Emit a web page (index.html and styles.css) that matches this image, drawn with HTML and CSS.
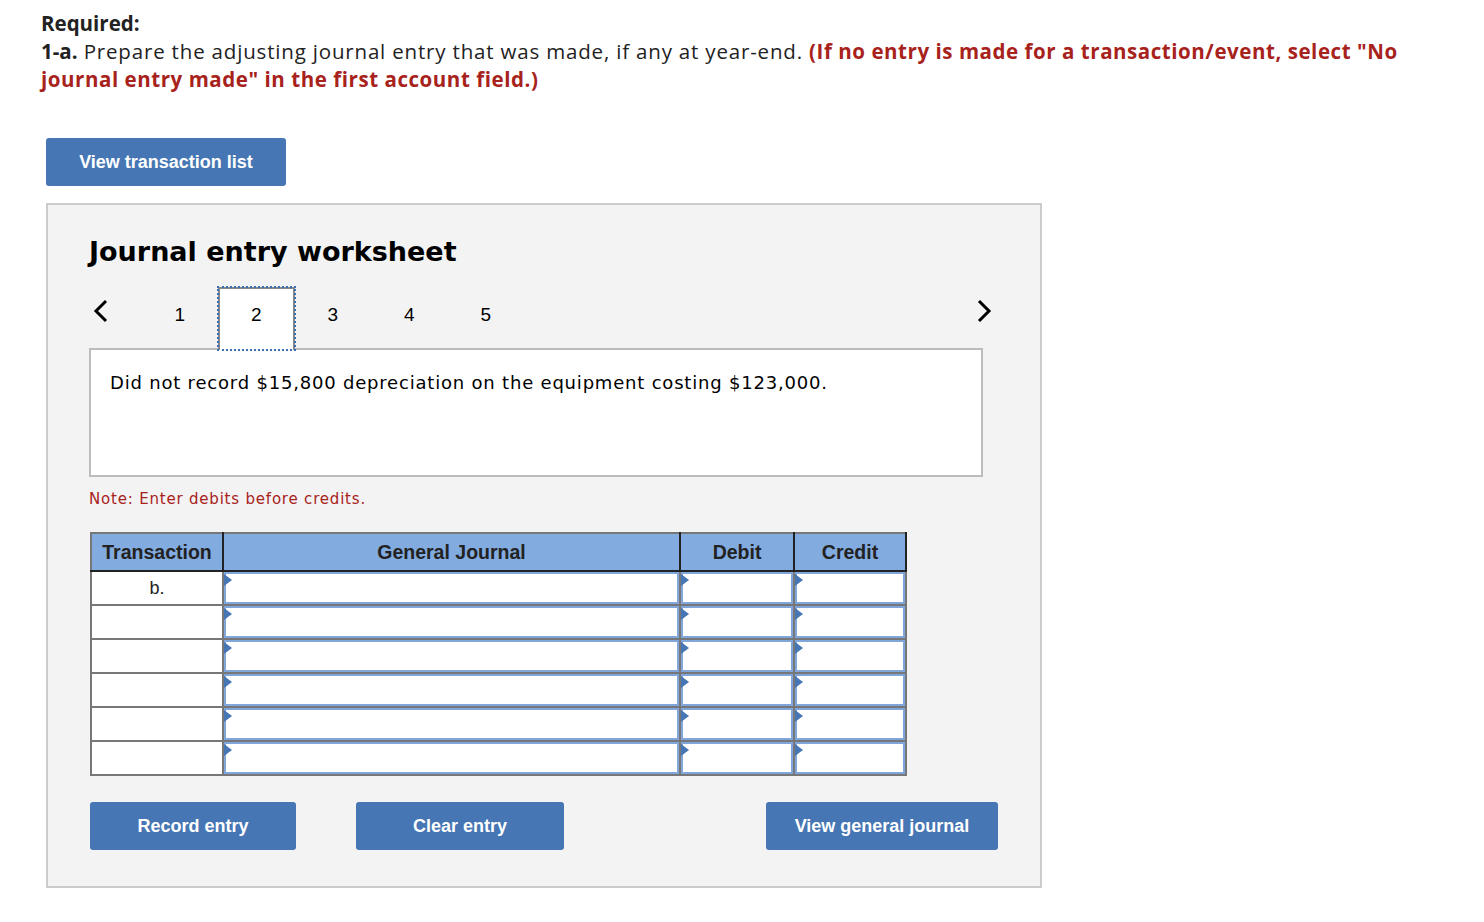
FILE: index.html
```html
<!DOCTYPE html>
<html lang="en">
<head>
  <meta charset="UTF-8" />
  <title>Journal entry worksheet</title>
  <meta name="viewport" content="width=device-width, initial-scale=1" />
  <link rel="stylesheet" href="styles.css">
</head>
<body>
  <div class="question">
    <p class="required">Required:</p>
    <p class="prompt"><b>1-a.</b> Prepare the adjusting journal entry that was made, if any at year-end. <span class="hint">(If no entry is made for a transaction/event, select "No journal entry made" in the first account field.)</span></p>
  </div>

  <button class="btn btn-list">View transaction list</button>

  <div class="worksheet">
    <h2>Journal entry worksheet</h2>

    <div class="tabs">
      <button class="arrow prev">
        <svg width="16" height="24" viewBox="0 0 16 24"><path d="M13 2 L3 12 L13 22" fill="none" stroke="#000" stroke-width="3"/></svg>
      </button>
      <span class="tab">1</span>
      <span class="tab active">2</span>
      <span class="tab">3</span>
      <span class="tab">4</span>
      <span class="tab">5</span>
      <span class="spacer"></span>
      <button class="arrow next">
        <svg width="16" height="24" viewBox="0 0 16 24"><path d="M3 2 L13 12 L3 22" fill="none" stroke="#000" stroke-width="3"/></svg>
      </button>
    </div>

    <div class="description">Did not record $15,800 depreciation on the equipment costing $123,000.</div>

    <p class="note">Note: Enter debits before credits.</p>

    <table class="journal">
      <colgroup>
        <col class="c-trans">
        <col class="c-account">
        <col class="c-debit">
        <col class="c-credit">
      </colgroup>
      <thead>
        <tr>
          <th>Transaction</th>
          <th>General Journal</th>
          <th>Debit</th>
          <th>Credit</th>
        </tr>
      </thead>
      <tbody>
        <tr>
          <td class="trans">b.</td>
          <td><div class="field"></div></td>
          <td><div class="field"></div></td>
          <td><div class="field"></div></td>
        </tr>
        <tr>
          <td class="trans"></td>
          <td><div class="field"></div></td>
          <td><div class="field"></div></td>
          <td><div class="field"></div></td>
        </tr>
        <tr>
          <td class="trans"></td>
          <td><div class="field"></div></td>
          <td><div class="field"></div></td>
          <td><div class="field"></div></td>
        </tr>
        <tr>
          <td class="trans"></td>
          <td><div class="field"></div></td>
          <td><div class="field"></div></td>
          <td><div class="field"></div></td>
        </tr>
        <tr>
          <td class="trans"></td>
          <td><div class="field"></div></td>
          <td><div class="field"></div></td>
          <td><div class="field"></div></td>
        </tr>
        <tr>
          <td class="trans"></td>
          <td><div class="field"></div></td>
          <td><div class="field"></div></td>
          <td><div class="field"></div></td>
        </tr>
      </tbody>
    </table>

    <div class="actions">
      <button class="btn btn-record">Record entry</button>
      <button class="btn btn-clear">Clear entry</button>
      <span class="spacer"></span>
      <button class="btn btn-journal">View general journal</button>
    </div>
  </div>
</body>
</html>
```

FILE: styles.css
```css
body {
  margin: 0;
  padding: 9px 0 0 41px;
  font-family: "Open Sans", Lato, sans-serif;
  background-color: #fff;
  color: #222;
}

.question {
  width: 1380px;
  font-size: 20.5px;
  line-height: 28px;
}

.question p {
  margin: 0;
}

.required {
  font-weight: bold;
}

.prompt {
  letter-spacing: 0.82px;
}

.prompt b {
  font-weight: bold;
  letter-spacing: 0;
}

.hint {
  color: #a8221c;
  font-weight: bold;
  letter-spacing: 0.55px;
}

.btn {
  background-color: #4676b4;
  color: #fff;
  border: none;
  border-radius: 3px;
  font-family: "Liberation Sans", Arial, sans-serif;
  font-weight: bold;
  font-size: 18px;
  height: 48px;
  cursor: pointer;
  padding: 0;
}

.btn-list {
  display: block;
  width: 240px;
  margin: 45px 0 17px 5px;
}

.worksheet {
  height: 681px;
  width: 951px;
  margin-left: 5px;
  border: 2px solid #cbcbcb;
  background-color: #f3f3f3;
  padding: 0 0 0 41px;
}

.worksheet h2 {
  margin: 29px 0 0 0;
  font-family: "DejaVu Sans", Verdana, sans-serif;
  font-size: 27px;
  line-height: 36px;
  font-weight: bold;
  color: #000;
}

.tabs {
  display: flex;
  align-items: flex-start;
  height: 64px;
  margin: 17px 0 -3px 0;
  width: 903px;
  position: relative;
  z-index: 1;
}

.arrow {
  background: none;
  border: none;
  padding: 0;
  margin-top: 12px;
  cursor: pointer;
  height: 24px;
}

.arrow.prev {
  margin-left: 4px;
  margin-right: 32.5px;
}

.tab {
  width: 76.5px;
  height: 63px;
  box-sizing: border-box;
  padding-top: 17px;
  text-align: center;
  font-family: "Liberation Sans", Arial, sans-serif;
  font-size: 19px;
  color: #000;
}

.tab.active {
  position: relative;
  background-color: #fff;
  border: 2px solid #888;
  border-bottom: none;
  padding-top: 15px;
}

/* focus ring */
.tab.active::after {
  content: "";
  position: absolute;
  top: -3px;
  left: -3px;
  right: -3px;
  bottom: -1px;
  border: 2px dotted #3a6fb8;
}

.spacer {
  flex: 1;
}

.description {
  width: 894px;
  height: 129px;
  box-sizing: border-box;
  background-color: #fff;
  border: 2px solid #bcbcbc;
  padding: 22px 19px;
  font-family: "DejaVu Sans", Verdana, sans-serif;
  font-size: 18px;
  letter-spacing: 0.8px;
  color: #000;
}

.note {
  margin: 12px 0 23px 0;
  font-family: "DejaVu Sans", Verdana, sans-serif;
  font-size: 15px;
  letter-spacing: 0.8px;
  line-height: 20px;
  color: #a8221c;
}

.journal {
  border-collapse: collapse;
  table-layout: fixed;
  width: 815px;
  margin-left: 1px;
  border: 2px solid #777;
  font-family: "Liberation Sans", Arial, sans-serif;
}

.c-trans { width: 132px; }
.c-account { width: 457px; }
.c-debit { width: 114px; }
.c-credit { width: 112px; }

.journal th {
  background-color: #82abe0;
  color: #222;
  font-size: 19.5px;
  font-weight: bold;
  height: 36px;
  padding: 0;
  border: 2px solid #222;
  border-top-color: #777;
}

.journal th:first-child {
  border-left-color: #777;
}

.journal td {
  height: 32px;
  padding: 0;
  border: 2px solid #777;
  background-color: #fff;
  vertical-align: top;
}

.journal td.trans {
  text-align: center;
  vertical-align: middle;
  font-size: 18px;
  color: #222;
}

.field {
  position: relative;
  height: 32px;
  box-sizing: border-box;
  border: 2px solid #80a6dc;
  background-color: #fff;
}

.field::before {
  content: "";
  position: absolute;
  left: -2px;
  top: 0;
  border-top: 6px solid transparent;
  border-bottom: 6px solid transparent;
  border-left: 8px solid #4676b4;
}

.actions {
  display: flex;
  width: 908px;
  margin: 26px 0 0 1px;
}

.btn-record {
  width: 206px;
}

.btn-clear {
  width: 208px;
  margin-left: 60px;
}

.btn-journal {
  width: 232px;
}
```
